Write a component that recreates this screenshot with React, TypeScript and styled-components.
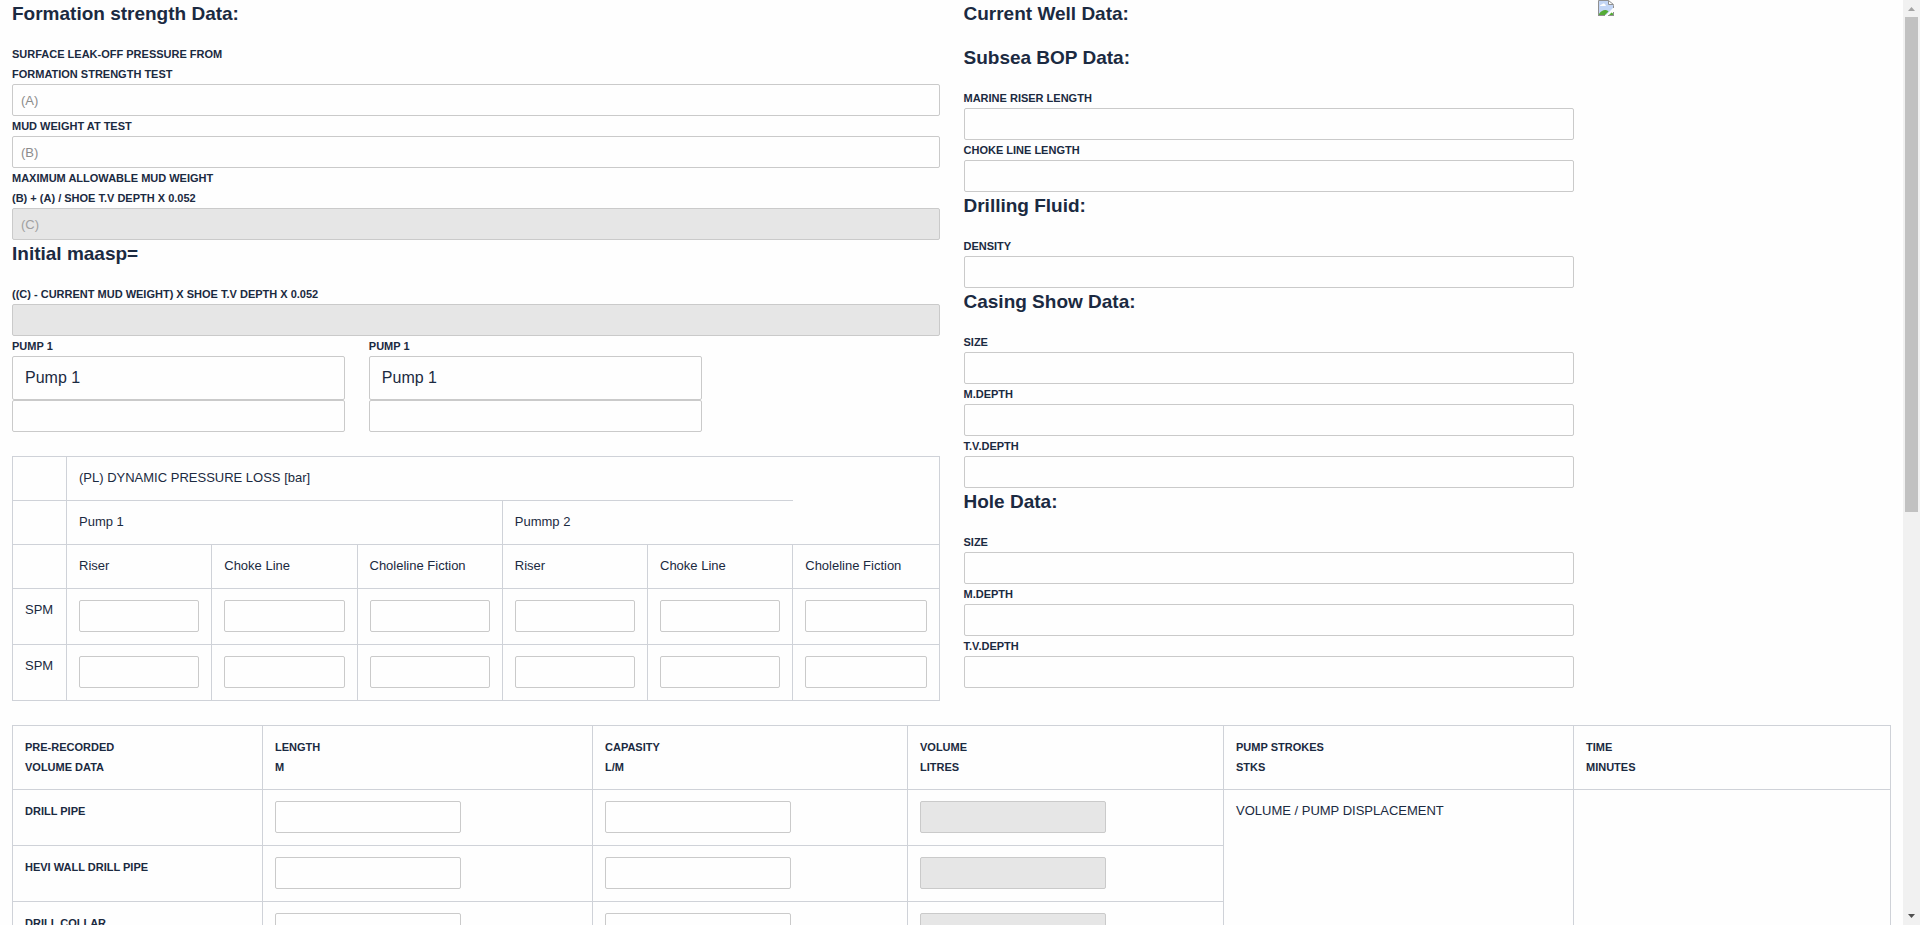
import React, { useId } from "react";
import styled, { createGlobalStyle } from "styled-components";

const ink = "#1b2a41";
const line = "#cfd2d8";
const inputLine = "#cacaca";

const GlobalStyle = createGlobalStyle`
  *, *::before, *::after { box-sizing: border-box; }
  body {
    margin: 0;
    background: #fefefe;
    color: ${ink};
    font: 13px/20px Arial, "Liberation Sans", sans-serif;
  }
`;

const Shell = styled.div`
  display: flex;
  height: 100vh;
  overflow: hidden;
`;

const Page = styled.main`
  flex: 1;
  min-width: 0;
  overflow: hidden;
`;

const Columns = styled.div`
  display: grid;
  grid-template-columns: 6fr 4fr 2fr;
`;

const Column = styled.section`
  min-width: 0;
  padding: 0 12px;
`;

const Heading = styled.h2`
  margin: 0 0 16px;
  font-size: 19px;
  line-height: 28px;
  font-weight: 700;
`;

const FieldLabel = styled.label`
  display: block;
  font-size: 11px;
  line-height: 20px;
  font-weight: 700;
  text-transform: uppercase;
`;

const TextInput = styled.input<{ $width?: string; $large?: boolean }>`
  display: block;
  width: ${(p) => p.$width ?? "100%"};
  height: ${(p) => (p.$large ? "44px" : "32px")};
  padding: ${(p) => (p.$large ? "0 12px" : "0 8px")};
  border: 1px solid ${inputLine};
  border-radius: 2px;
  background: #fefefe;
  color: ${ink};
  font-family: inherit;
  font-size: ${(p) => (p.$large ? "16px" : "13px")};

  &::placeholder { color: #8c8c8c; opacity: 1; }
  &:disabled { background: #e6e6e6; }
  &:disabled::placeholder { color: #a0a0a0; }
`;

const PumpRow = styled.div`
  display: grid;
  grid-template-columns: 3fr 3fr 2fr;
  margin: 0 -12px 24px;
`;

const PumpColumn = styled.div`
  padding: 0 12px;
`;

const Table = styled.table`
  width: 100%;
  table-layout: fixed;
  border: 1px solid ${line};
  border-bottom: 0;
  border-collapse: separate;
  border-spacing: 0;
`;

const Cell = styled.td<{ $last?: boolean }>`
  padding: 11px 12px 12px;
  border-right: ${(p) => (p.$last ? "0" : `1px solid ${line}`)};
  border-bottom: 1px solid ${line};
  vertical-align: top;
  text-align: left;
  font-weight: 400;
`;

const CapsCell = styled(Cell)`
  font-size: 11px;
  font-weight: 700;
  text-transform: uppercase;
`;

const Col = styled.col<{ $width?: number }>`
  width: ${(p) => (p.$width ? `${p.$width}px` : "auto")};
`;

const VolumeSection = styled.section`
  padding: 24px 12px;
`;

const ImageIcon = styled.svg`
  display: block;
`;

const ScrollBar = styled.div`
  display: flex;
  flex-direction: column;
  width: 17px;
  background: #f1f1f1;
`;

const ScrollArrow = styled.svg`
  display: block;
  flex: none;
`;

const ScrollTrack = styled.div`
  flex: 1;
  padding: 0 2px;
`;

const ScrollThumb = styled.div`
  height: 55.5%;
  background: #c1c1c1;
`;

type FieldProps = {
  label: React.ReactNode;
  placeholder?: string;
  disabled?: boolean;
};

function Field({ label, placeholder, disabled }: FieldProps) {
  const id = useId();
  return (
    <>
      <FieldLabel htmlFor={id}>{label}</FieldLabel>
      <TextInput id={id} type="text" placeholder={placeholder} disabled={disabled} />
    </>
  );
}

function Pump() {
  const id = useId();
  return (
    <PumpColumn>
      <FieldLabel htmlFor={id}>Pump 1</FieldLabel>
      <TextInput id={id} type="text" defaultValue="Pump 1" $large />
      <TextInput type="text" aria-label="Pump 1 value" />
    </PumpColumn>
  );
}

const pressureColumns = [
  "Riser",
  "Choke Line",
  "Choleline Fiction",
  "Riser",
  "Choke Line",
  "Choleline Fiction",
];
const lastPressure = pressureColumns.length - 1;

function PressureTable() {
  return (
    <Table>
      <colgroup>
        <Col $width={54} />
        {pressureColumns.map((_, i) => (
          <Col key={i} />
        ))}
      </colgroup>
      <tbody>
        <tr>
          <Cell />
          <Cell as="th" colSpan={5} $last>(PL) DYNAMIC PRESSURE LOSS [bar]</Cell>
        </tr>
        <tr>
          <Cell />
          <Cell as="th" colSpan={3}>Pump 1</Cell>
          <Cell as="th" colSpan={3} $last>Pummp 2</Cell>
        </tr>
        <tr>
          <Cell />
          {pressureColumns.map((name, i) => (
            <Cell as="th" key={i} $last={i === lastPressure}>{name}</Cell>
          ))}
        </tr>
        {[1, 2].map((row) => (
          <tr key={row}>
            <Cell as="th">SPM</Cell>
            {pressureColumns.map((name, i) => (
              <Cell key={i} $last={i === lastPressure}>
                <TextInput type="text" aria-label={`SPM ${row} ${name}`} />
              </Cell>
            ))}
          </tr>
        ))}
      </tbody>
    </Table>
  );
}

const volumeHeads = [
  { title: "Pre-recorded", unit: "Volume data", width: 250 },
  { title: "Length", unit: "m", width: 330 },
  { title: "Capasity", unit: "l/m", width: 315 },
  { title: "Volume", unit: "litres", width: 316 },
  { title: "Pump strokes", unit: "stks", width: 350 },
  { title: "Time", unit: "minutes", width: undefined },
];

const volumeRows = ["Drill pipe", "Hevi wall drill pipe", "Drill collar"];

function VolumeTable() {
  return (
    <Table>
      <colgroup>
        {volumeHeads.map((h) => (
          <Col key={h.title} $width={h.width} />
        ))}
      </colgroup>
      <thead>
        <tr>
          {volumeHeads.map((h, i) => (
            <CapsCell as="th" key={h.title} $last={i === volumeHeads.length - 1}>
              {h.title}
              <br />
              {h.unit}
            </CapsCell>
          ))}
        </tr>
      </thead>
      <tbody>
        {volumeRows.map((name, i) => (
          <tr key={name}>
            <CapsCell as="th">{name}</CapsCell>
            <Cell>
              <TextInput type="text" aria-label={`${name} length`} $width="186px" />
            </Cell>
            <Cell>
              <TextInput type="text" aria-label={`${name} capasity`} $width="186px" />
            </Cell>
            <Cell>
              <TextInput type="text" aria-label={`${name} volume`} $width="186px" disabled />
            </Cell>
            {i === 0 && (
              <>
                <Cell rowSpan={volumeRows.length}>VOLUME / PUMP DISPLACEMENT</Cell>
                <Cell rowSpan={volumeRows.length} $last />
              </>
            )}
          </tr>
        ))}
      </tbody>
    </Table>
  );
}

function MissingImage() {
  return (
    <ImageIcon width="16" height="16" viewBox="0 0 16 16" role="img" aria-label="Missing image">
      <path d="M1 1H11V5H15V8L8 15H1Z" fill="#c3d6f6" />
      <path d="M2 6C2 5 3 4.500 4 4.500C4.500 3 7 3 7 4.500C8 4.500 8 6 7.500 6Z" fill="#fff" />
      <path d="M1 15V14C3 11 5 10 7 10C8.500 10 9.500 10.500 10.500 11.500L7 15Z" fill="#55ab36" />
      <path d="M11 15L13.500 12.500L15 13.500V15Z" fill="#55ab36" />
      <path d="M0.500 16V0.500H10.500L15.500 5.500V8M15.500 12V15.500M0 15.500H7M10 15.500H16" fill="none" stroke="#909090" />
      <path d="M10.500 0.500V4.500H15.500Z" fill="#fff" stroke="#909090" />
    </ImageIcon>
  );
}

export default function App() {
  return (
    <>
      <GlobalStyle />
      <Shell>
        <Page>
          <Columns>
            <Column>
              <Heading>Formation strength Data:</Heading>
              <Field
                label={<>Surface leak-off pressure from<br />formation strength test</>}
                placeholder="(A)"
              />
              <Field label="Mud weight at test" placeholder="(B)" />
              <Field
                label={<>Maximum allowable mud weight<br />(B) + (A) / shoe T.V depth x 0.052</>}
                placeholder="(C)"
                disabled
              />
              <Heading>Initial maasp=</Heading>
              <Field label="((C) - current mud weight) x shoe T.V depth x 0.052" disabled />
              <PumpRow>
                <Pump />
                <Pump />
              </PumpRow>
              <PressureTable />
            </Column>
            <Column>
              <Heading>Current Well Data:</Heading>
              <Heading>Subsea BOP Data:</Heading>
              <Field label="Marine riser length" />
              <Field label="Choke line length" />
              <Heading>Drilling Fluid:</Heading>
              <Field label="Density" />
              <Heading>Casing Show Data:</Heading>
              <Field label="Size" />
              <Field label="M.Depth" />
              <Field label="T.V.Depth" />
              <Heading>Hole Data:</Heading>
              <Field label="Size" />
              <Field label="M.Depth" />
              <Field label="T.V.Depth" />
            </Column>
            <Column>
              <MissingImage />
            </Column>
          </Columns>
          <VolumeSection>
            <VolumeTable />
          </VolumeSection>
        </Page>
        <ScrollBar aria-hidden="true">
          <ScrollArrow width="17" height="17" viewBox="0 0 17 17">
            <path d="M5 11H12L8.500 7Z" fill="#a3a3a3" />
          </ScrollArrow>
          <ScrollTrack>
            <ScrollThumb />
          </ScrollTrack>
          <ScrollArrow width="17" height="17" viewBox="0 0 17 17">
            <path d="M5 6H12L8.500 10Z" fill="#505050" />
          </ScrollArrow>
        </ScrollBar>
      </Shell>
    </>
  );
}
